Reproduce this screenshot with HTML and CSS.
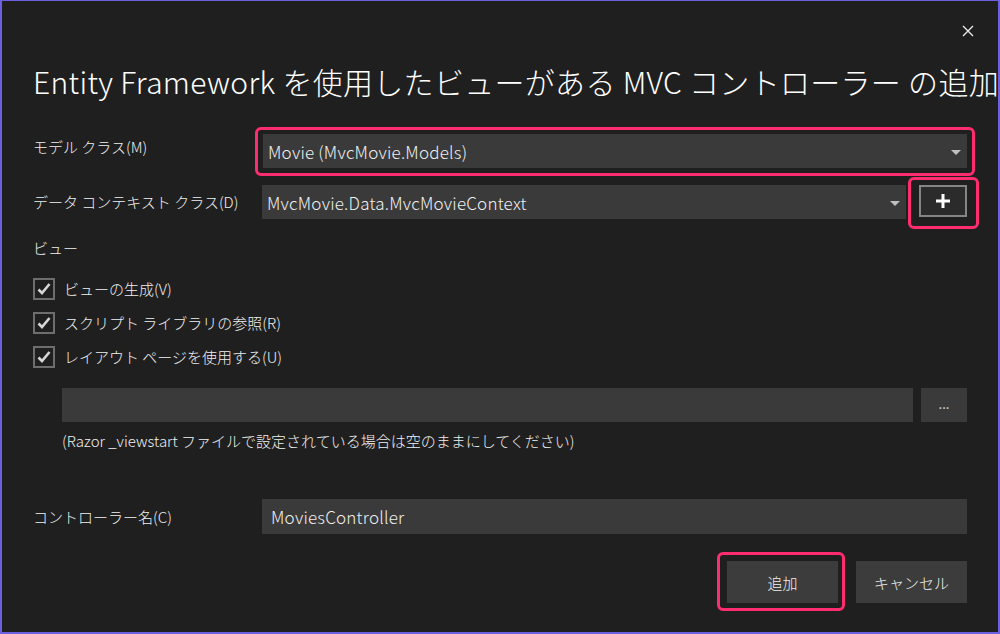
FILE: index.html
```html
<!DOCTYPE html>
<html lang="ja">
<head>
  <meta charset="UTF-8">
  <title>Entity Framework を使用したビューがある MVC コントローラー の追加</title>
  <link rel="stylesheet" href="styles.css">
</head>
<body>

<div class="ventana">
  <div class="barra">
    <button class="cerrar" title="閉じる">
      <svg width="14" height="14" viewBox="0 0 14 14"><path d="M2 2 L12 12 M12 2 L2 12" stroke="#e8e8e8" stroke-width="1.4" fill="none"/></svg>
    </button>
  </div>

  <h1 class="titulo">Entity Framework を使用したビューがある MVC コントローラー の追加</h1>

  <div class="fila fila-modelo">
    <div class="etiqueta">モデル クラス(M)</div>
    <div class="combo marca marca-modelo">
      <span>Movie (MvcMovie.Models)</span>
      <span class="flecha"></span>
    </div>
  </div>

  <div class="fila fila-contexto">
    <div class="etiqueta">データ コンテキスト クラス(D)</div>
    <div class="control-doble">
      <div class="combo">
        <span>MvcMovie.Data.MvcMovieContext</span>
        <span class="flecha"></span>
      </div>
      <button class="mas marca marca-mas">
        <svg width="16" height="16" viewBox="0 0 16 16"><path d="M8 1 V15 M1 8 H15" stroke="#ffffff" stroke-width="3" fill="none"/></svg>
      </button>
    </div>
  </div>

  <div class="seccion">ビュー</div>

  <div class="opciones">
    <label class="opcion"><span class="casilla"><svg width="18" height="18" viewBox="0 0 18 18"><path d="M3.5 9.5 L7 13 L14.5 4" stroke="#d6d6d6" stroke-width="2.6" fill="none"/></svg></span>ビューの生成(V)</label>
    <label class="opcion"><span class="casilla"><svg width="18" height="18" viewBox="0 0 18 18"><path d="M3.5 9.5 L7 13 L14.5 4" stroke="#d6d6d6" stroke-width="2.6" fill="none"/></svg></span>スクリプト ライブラリの参照(R)</label>
    <label class="opcion"><span class="casilla"><svg width="18" height="18" viewBox="0 0 18 18"><path d="M3.5 9.5 L7 13 L14.5 4" stroke="#d6d6d6" stroke-width="2.6" fill="none"/></svg></span>レイアウト ページを使用する(U)</label>
  </div>

  <div class="diseno">
    <div class="caja"></div>
    <button class="puntos">...</button>
  </div>
  <div class="nota">(Razor _viewstart ファイルで設定されている場合は空のままにしてください)</div>

  <div class="fila fila-nombre">
    <div class="etiqueta">コントローラー名(C)</div>
    <div class="caja caja-nombre">MoviesController</div>
  </div>

  <div class="botones">
    <button class="boton marca marca-agregar">追加</button>
    <button class="boton">キャンセル</button>
  </div>
</div>

</body>
</html>
```

FILE: styles.css
```css
* {
  box-sizing: border-box;
}

body {
  margin: 0;
  background: #1f1f1f;
  color: #f0f0f0;
  font-family: "Noto Sans CJK JP", "Noto Sans", sans-serif;
  font-size: 15px;
  font-weight: 300;
}

.ventana {
  width: 1000px;
  height: 634px;
  border: 2px solid #6c5fe0;
  border-top-width: 1px;
  padding: 0 31px;
  overflow: hidden;
}

.barra {
  display: flex;
  justify-content: flex-end;
  padding-top: 23px;
  height: 37px;
}

.cerrar {
  background: none;
  border: none;
  padding: 0;
  margin-right: -8px;
  width: 14px;
  height: 14px;
  display: flex;
}

.titulo {
  margin: 23px -40px 0 0;
  font-size: 30px;
  font-weight: 300;
  letter-spacing: 0.3px;
  line-height: 40px;
  height: 40px;
  white-space: nowrap;
  color: #ffffff;
}

.fila {
  display: grid;
  grid-template-columns: 229px 1fr;
  align-items: center;
}

.fila-modelo {
  margin-top: 33px;
}

.fila-modelo .etiqueta {
  margin-bottom: 8px;
}

.fila-contexto {
  margin-top: 17px;
}

.etiqueta {
  line-height: 22px;
}

.combo {
  height: 34px;
  background: #3a3a3a;
  display: flex;
  align-items: center;
  justify-content: space-between;
  padding: 0 6px 0 5px;
  font-size: 17px;
  letter-spacing: 0.2px;
}

.fila-modelo .combo {
  margin-left: 1px;
}

.flecha {
  width: 0;
  height: 0;
  border-left: 5px solid transparent;
  border-right: 5px solid transparent;
  border-top: 5px solid #c0c0c0;
  margin-top: 2px;
}

.control-doble {
  display: flex;
  align-items: flex-start;
  gap: 13px;
}

.control-doble .combo {
  flex: 1;
}

.mas {
  width: 48px;
  height: 32px;
  background: #2b2b2b;
  border: 2px solid #858585;
  display: flex;
  align-items: center;
  justify-content: center;
  padding: 0;
}

.marca {
  position: relative;
}

.marca::after {
  content: "";
  position: absolute;
  border: 3px solid #ff2d6f;
  border-radius: 6px;
  pointer-events: none;
}

.marca-modelo::after {
  inset: -7px -8px -8px -8px;
}

.marca-mas::after {
  inset: -10px -14px -14px -13px;
}

.marca-agregar::after {
  inset: -9px -7px -8px -10px;
}

.seccion {
  margin-top: 18px;
  line-height: 22px;
}

.opciones {
  margin-top: 19px;
  display: flex;
  flex-direction: column;
  gap: 12px;
}

.opcion {
  display: flex;
  align-items: center;
  gap: 9px;
  line-height: 22px;
}

.casilla {
  width: 22px;
  height: 22px;
  border: 2px solid #6e6e6e;
  display: flex;
  align-items: center;
  justify-content: center;
}

.diseno {
  margin: 20px 0 0 29px;
  display: flex;
  gap: 8px;
}

.caja {
  flex: 1;
  height: 34px;
  background: #3a3a3a;
}

.puntos {
  width: 46px;
  height: 34px;
  border: none;
  background: #3a3a3a;
  color: #e0e0e0;
  font-family: inherit;
  font-size: 13px;
  padding: 0 0 4px;
}

.nota {
  margin: 8px 0 0 29px;
  line-height: 22px;
}

.fila-nombre {
  margin-top: 47px;
}

.caja-nombre {
  height: 35px;
  line-height: 35px;
  padding-left: 9px;
  font-size: 17px;
  letter-spacing: 0.2px;
}

.botones {
  margin-top: 27px;
  display: flex;
  justify-content: flex-end;
  gap: 18px;
}

.boton {
  width: 111px;
  height: 42px;
  background: #3c3c3c;
  border: none;
  color: #f0f0f0;
  font-family: inherit;
  font-size: 15px;
  font-weight: 300;
}
```
